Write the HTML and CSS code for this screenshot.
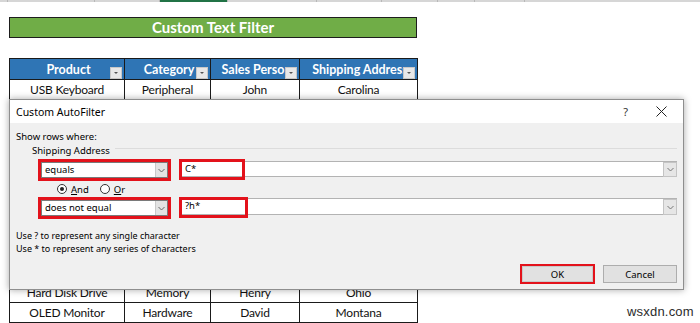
FILE: index.html
```html
<!DOCTYPE html>
<html lang="en">
<head>
<meta charset="UTF-8">
<meta name="viewport" content="width=device-width, initial-scale=1.0">
<title>Custom Text Filter</title>

<link rel="stylesheet" href="styles.css">

</head>
<body>

<!-- column header strip of the sheet, cut off at the top -->
<div class="col-strip">
    <span class="col" style="width:7px"></span>
    <span class="col" style="width:86px"></span>
    <span class="col" style="width:64px"></span>
    <span class="col active" style="width:67px"></span>
    <span class="col" style="width:88px"></span>
    <span class="col" style="width:64px"></span>
    <span class="col" style="width:55px"></span>
    <span class="col" style="width:36px"></span>
    <span class="col" style="width:49px"></span>
</div>

<div class="sheet">
    <div class="sheet-title">Custom Text Filter</div>

    <table class="data">
        <colgroup>
            <col style="width:115px">
            <col style="width:86px">
            <col style="width:89px">
            <col style="width:118px">
        </colgroup>
        <thead>
            <tr>
                <th><div class="th-text">Product</div><span class="filter-btn"></span></th>
                <th><div class="th-text">Category</div><span class="filter-btn"></span></th>
                <th><div class="th-text">Sales Person</div><span class="filter-btn"></span></th>
                <th><div class="th-text">Shipping Address</div><span class="filter-btn"></span></th>
            </tr>
        </thead>
        <tbody>
            <tr><td>USB Keyboard</td><td>Peripheral</td><td>John</td><td>Carolina</td></tr>
            <tr><td>Wireless Mouse</td><td>Peripheral</td><td>Chris</td><td>Chicago</td></tr>
            <tr><td>Graphics Card</td><td>Hardware</td><td>Adam</td><td>Texas</td></tr>
            <tr><td>SSD</td><td>Memory</td><td>Henry</td><td>Charlotte</td></tr>
            <tr><td>Webcam</td><td>Peripheral</td><td>David</td><td>Phoenix</td></tr>
            <tr><td>Motherboard</td><td>Hardware</td><td>John</td><td>Chicago</td></tr>
            <tr><td>RAM</td><td>Memory</td><td>Chris</td><td>Carolina</td></tr>
            <tr><td>Headphone</td><td>Peripheral</td><td>Adam</td><td>Utah</td></tr>
            <tr><td>Processor</td><td>Hardware</td><td>Henry</td><td>Texas</td></tr>
            <tr><td>Speaker</td><td>Peripheral</td><td>John</td><td>Chicago</td></tr>
            <tr><td>Hard Disk Drive</td><td>Memory</td><td>Henry</td><td>Ohio</td></tr>
            <tr><td>OLED Monitor</td><td>Hardware</td><td>David</td><td>Montana</td></tr>
        </tbody>
    </table>
</div>

<!-- Custom AutoFilter dialog, lies over the table -->
<div class="dialog">
    <div class="dlg-title">
        <span class="dlg-name">Custom AutoFilter</span>
        <span class="dlg-help">?</span>
        <svg class="dlg-close" width="11" height="11" viewBox="0 0 11 11">
            <path d="M0.5 0.5 L10.5 10.5 M10.5 0.5 L0.5 10.5" stroke="#222" stroke-width="1" fill="none"/>
        </svg>
    </div>

    <div class="dlg-body">
        <div class="show-label">Show rows where:</div>

        <div class="group-head">
            <span>Shipping Address</span>
            <span class="group-line"></span>
        </div>

        <div class="cond cond-1">
            <div class="select mark">
                <span class="select-text">equals</span>
                <span class="drop">
                    <svg width="7" height="5" viewBox="0 0 7 5"><path d="M0.5 1 L3.5 4 L6.5 1" stroke="#666" fill="none"/></svg>
                </span>
            </div>
            <div class="combo">
                <span class="combo-text">C*</span>
                <span class="drop">
                    <svg width="7" height="5" viewBox="0 0 7 5"><path d="M0.5 1 L3.5 4 L6.5 1" stroke="#777" fill="none"/></svg>
                </span>
                <span class="red-box box-1"></span>
            </div>
        </div>

        <div class="radios">
            <span class="radio checked"></span><span class="radio-label"><u>A</u>nd</span>
            <span class="radio"></span><span class="radio-label"><u>O</u>r</span>
        </div>

        <div class="cond cond-2">
            <div class="select mark">
                <span class="select-text">does not equal</span>
                <span class="drop">
                    <svg width="7" height="5" viewBox="0 0 7 5"><path d="M0.5 1 L3.5 4 L6.5 1" stroke="#666" fill="none"/></svg>
                </span>
            </div>
            <div class="combo">
                <span class="combo-text">?h*</span>
                <span class="drop">
                    <svg width="7" height="5" viewBox="0 0 7 5"><path d="M0.5 1 L3.5 4 L6.5 1" stroke="#777" fill="none"/></svg>
                </span>
                <span class="red-box box-2"></span>
            </div>
        </div>

        <div class="hint hint-1">Use ? to represent any single character</div>
        <div class="hint">Use * to represent any series of characters</div>

        <div class="buttons">
            <button class="btn btn-ok">OK</button>
            <button class="btn">Cancel</button>
        </div>
    </div>
</div>

<div class="watermark">wsxdn.com</div>

</body>
</html>
```

FILE: styles.css
```css
body {
    margin: 0;
    background: #ffffff;
    font-family: "Lato", "Liberation Sans", sans-serif;
    width: 700px;
    height: 323px;
    overflow: hidden;
    position: relative;
}

/* Strip of sheet column headers */
.col-strip {
    display: flex;
    height: 2px;
    background: #d6d6d6;
}

.col {
    height: 2px;
    border-right: 1px solid #b8b8b8;
}

.col.active {
    background: #217346;
}

/* Sheet area */
.sheet {
    padding: 15px 0 0 9px;
}

.sheet-title {
    box-sizing: border-box;
    width: 408px;
    height: 21px;
    background: #70ad47;
    border: 1px solid #1d1d1d;
    color: #ffffff;
    font-weight: bold;
    font-size: 15px;
    line-height: 19px;
    text-align: center;
}

/* Data table */
.data {
    margin-top: 20px;
    border-collapse: collapse;
    table-layout: fixed;
    width: 408px;
    font-size: 12px;
    letter-spacing: -0.2px;
}

.data th {
    position: relative;
    background: #2f75b5;
    color: #ffffff;
    font-weight: bold;
    font-size: 12.5px;
    height: 20px;
    padding: 0 4px 0 7px;
    border: 1px solid #1a1a1a;
    letter-spacing: 0;
}

.th-text {
    overflow: hidden;
    white-space: nowrap;
    text-align: center;
}

/* filter button sits over the right end of the header text */
.filter-btn {
    position: absolute;
    right: 2px;
    top: 8px;
    width: 10px;
    height: 10px;
    background: #e8e8e8;
    border: 1px solid #c8c8c8;
}

.filter-btn::after {
    content: "";
    position: absolute;
    left: 3px;
    top: 4px;
    border-left: 2px solid transparent;
    border-right: 2px solid transparent;
    border-top: 2px solid #555;
}

.data td {
    height: 19.25px;
    padding: 0;
    text-align: center;
    border: 1px solid #1a1a1a;
    color: #111;
}

/* Dialog */
.dialog {
    position: absolute;
    left: 9px;
    top: 99px;
    width: 675px;
    box-sizing: border-box;
    border: 1px solid #8e8e8e;
    background: #f0f0f0;
    box-shadow: 0 0 7px rgba(0, 0, 0, 0.35);
    font-family: "Noto Sans", "Liberation Sans", sans-serif;
    font-size: 9.5px;
    color: #000;
}

.dlg-title {
    height: 23px;
    background: #ffffff;
    display: flex;
    align-items: center;
    padding-left: 6px;
}

.dlg-name {
    flex: 1;
    font-size: 10.5px;
}

.dlg-help {
    font-size: 11px;
    margin-right: 28px;
    color: #333;
}

.dlg-close {
    margin-right: 16px;
}

.dlg-body {
    padding: 0 6px 5px 6px;
}

.show-label {
    margin-top: 7px;
    line-height: 14px;
}

.group-head {
    display: flex;
    align-items: center;
    height: 12px;
    margin-left: 16px;
}

.group-line {
    flex: 1;
    height: 1px;
    background: #dcdcdc;
    margin: -3px 0 0 5px;
}

.cond {
    display: flex;
    align-items: flex-start;
}

.cond-1 {
    margin-top: 3px;
    height: 22px;
}

.cond-2 {
    height: 21px;
}

.select {
    box-sizing: border-box;
    display: flex;
    width: 127px;
    height: 16px;
    margin: 3px 0 0 25px;
    background: #ffffff;
    border: 1px solid #7a7a7a;
}

.mark {
    outline: 3px solid #e3121b;
}

.select-text {
    flex: 1;
    padding-left: 3px;
    line-height: 14px;
}

.drop {
    width: 11px;
    background: #e3e3e3;
    border-left: 1px solid #c9c9c9;
    display: flex;
    align-items: center;
    justify-content: center;
}

.combo {
    position: relative;
    box-sizing: border-box;
    display: flex;
    flex: 1;
    height: 16px;
    margin: 2px 0 0 13px;
    background: #ffffff;
    border: 1px solid #b3b3b3;
}

.cond-2 .combo {
    margin-top: 1px;
    height: 17px;
}

.combo-text {
    flex: 1;
    padding-left: 3px;
    line-height: 14px;
}

.combo .drop {
    width: 12px;
    border: 1px solid #c4c4c4;
    background: #e6e6e6;
    margin: 0 -1px -1px 0;
}

/* annotation boxes drawn over the value fields */
.red-box {
    position: absolute;
    box-sizing: border-box;
    border: 3px solid #e3121b;
    left: -3px;
}

.box-1 {
    top: -3px;
    width: 66px;
    height: 21px;
}

.box-2 {
    top: -2px;
    width: 69px;
    height: 21px;
}

.radios {
    display: flex;
    align-items: center;
    height: 16px;
    padding-left: 41px;
}

.radio {
    box-sizing: border-box;
    width: 10px;
    height: 10px;
    border: 1px solid #333;
    border-radius: 50%;
    background: #ffffff;
    position: relative;
}

.radio.checked::after {
    content: "";
    position: absolute;
    left: 2px;
    top: 2px;
    width: 4px;
    height: 4px;
    border-radius: 50%;
    background: #222;
}

.radio-label {
    margin: 0 11px 0 4px;
}

.hint {
    line-height: 13px;
    font-size: 9px;
}

.hint-1 {
    margin-top: 11px;
}

.buttons {
    margin-top: 9px;
    display: flex;
    justify-content: flex-end;
    align-items: center;
    gap: 8px;
    height: 20px;
}

.btn {
    box-sizing: border-box;
    width: 74px;
    height: 18px;
    padding: 0;
    background: #e1e1e1;
    border: 1px solid #adadad;
    font-family: "Noto Sans", "Liberation Sans", sans-serif;
    font-size: 9.5px;
    color: #000;
}

.btn-ok {
    width: 75px;
    height: 20px;
    border: 2px solid #e3121b;
    box-shadow: inset 0 0 0 1px #c9c9c9;
}

.watermark {
    position: absolute;
    left: 627px;
    top: 304px;
    font-family: "Liberation Sans", sans-serif;
    font-size: 13px;
    color: #2b2b2b;
    letter-spacing: 0.2px;
}
```
